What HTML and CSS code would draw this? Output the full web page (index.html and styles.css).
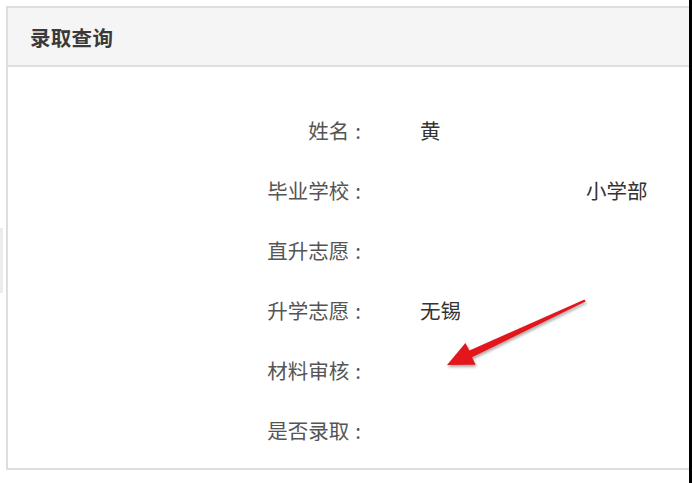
FILE: index.html
```html
<!DOCTYPE html>
<html lang="zh-CN">
<head>
  <meta charset="UTF-8">
  <meta name="viewport" content="width=device-width, initial-scale=1.0">
  <title>录取查询</title>
  <link rel="stylesheet" href="styles.css">
</head>
<body>
  <div class="page">
    <div class="gutter"><span class="gutter-tab"></span></div>

    <section class="panel">
      <header class="panel-head">
        <h1>录取查询</h1>
      </header>

      <div class="panel-body">
        <dl class="result">
          <dt>姓名<span class="colon">:</span></dt>
          <dd>黄</dd>

          <dt>毕业学校<span class="colon">:</span></dt>
          <dd><span class="school">小学部</span></dd>

          <dt>直升志愿<span class="colon">:</span></dt>
          <dd></dd>

          <dt>升学志愿<span class="colon">:</span></dt>
          <dd>无锡</dd>

          <dt>材料审核<span class="colon">:</span></dt>
          <dd></dd>

          <dt>是否录取<span class="colon">:</span></dt>
          <dd></dd>
        </dl>

        <!-- annotation arrow drawn over the result -->
        <svg class="arrow" width="692" height="483" viewBox="0 0 692 483">
          <defs>
            <filter id="shade" x="-20%" y="-20%" width="140%" height="140%">
              <feDropShadow dx="1" dy="2" stdDeviation="1.5" flood-color="#000" flood-opacity="0.35"/>
            </filter>
          </defs>
          <polygon filter="url(#shade)" fill="#e3161c"
            points="447,364 465.4,342 469.4,349.6 584.5,298.4 585.6,300.6 472,356.2 475.6,363.8"/>
        </svg>
      </div>
    </section>

    <div class="edge"></div>
  </div>
</body>
</html>
```

FILE: styles.css
```css
/* Base */
body {
  margin: 0;
  background: #fff;
  font-family: "Microsoft YaHei", "Noto Sans CJK SC", "Noto Sans", sans-serif;
  color: #333;
}

.page {
  display: flex;
  height: 483px;
}

/* left gutter with a faint tab */
.gutter {
  width: 6px;
  flex: none;
}

.gutter-tab {
  display: block;
  width: 3px;
  height: 65px;
  margin-top: 228px;
  background: #ececec;
}

/* Panel */
.panel {
  flex: 1;
  margin-top: 6px;
  align-self: flex-start;
  border: 2px solid #dedede;
  border-right: none;
}

.panel-head {
  height: 57px;
  background: #f5f5f5;
  border-bottom: 2px solid #dedede;
  display: flex;
  align-items: center;
  padding-left: 22px;
}

.panel-head h1 {
  margin: 0;
  font-size: 20.5px;
  font-weight: bold;
  color: #3a3a3a;
  letter-spacing: 0.3px;
}

.panel-body {
  position: relative;
  height: 368px;
  padding: 33px 0 0;
}

/* Result rows */
.result {
  margin: 0;
  display: grid;
  grid-template-columns: 353px 1fr;
  column-gap: 59px;
  grid-auto-rows: 60px;
  align-items: center;
  font-size: 20.5px;
}

.result dt {
  text-align: right;
  color: #555;
}

.result dt .colon {
  margin-left: 6px;
}

.result dd {
  margin: 0;
  color: #333;
}

.school {
  margin-left: 166px;
}

/* Arrow overlay */
.arrow {
  position: absolute;
  left: -8px;
  top: -66px;
  pointer-events: none;
}

/* right window edge */
.edge {
  width: 3px;
  flex: none;
  background: #000;
}
```
